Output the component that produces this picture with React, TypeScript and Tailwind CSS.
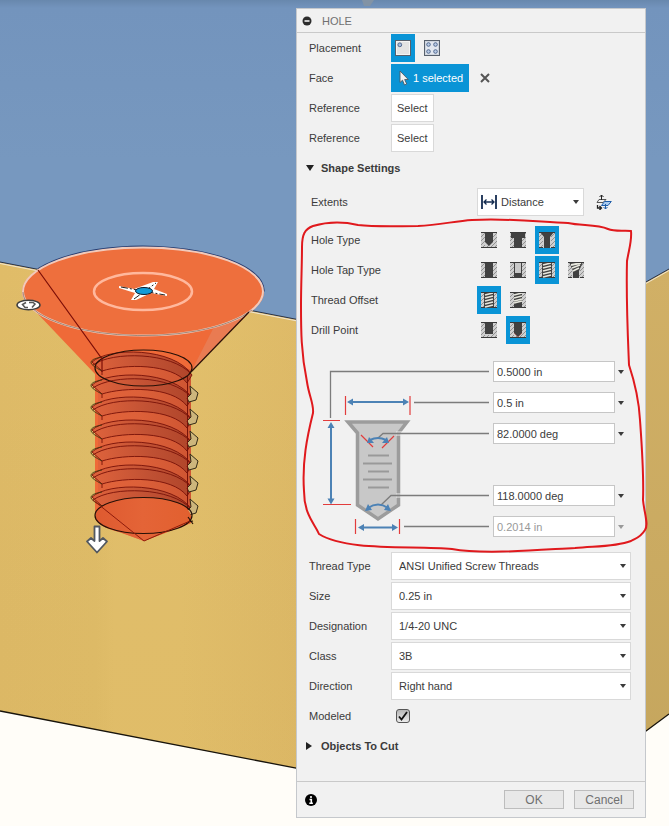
import { useState } from "react";
import type { ReactNode } from "react";

const HATCH = "M0 5L4 1M0 9L4 5M0 13L4 9M1 16L4 13M12 5L16 1M12 9L16 5M12 13L16 9M13 16L16 13M5 16L8 13M9 16L12 13";

const CAVITIES: Record<string, string> = {
  simple: "M4 0H12V10L8 14L4 10Z",
  counterbore: "M1 0H15V6H12V16H4V6H1Z",
  countersink: "M1 0H15L11 5V16H5V5Z",
  plain: "M4 0H12V16H4Z",
  clearance: "M4 0H12V16H4Z",
  tapped: "M3 0H13V16H3Z",
  taper: "M1 0H15L11 9V16H5V9Z",
  full: "M3 0H13V16H3Z",
  offset: "M4 0H12V16H4Z",
  flat: "M4 0H12V12H4Z",
  angled: "M4 0H12V11L8 15L4 11Z",
};

const THREADS: Record<string, string> = {
  tapped: "M4 3L12 1M4 6L12 4M4 9L12 7M4 12L12 10M4 15L12 13",
  full: "M4 3L12 1M4 6L12 4M4 9L12 7M4 12L12 10M4 15L12 13",
  offset: "M4 3L12 1M4 6L12 4M4 9L12 7M4 11L12 9",
  taper: "M3 3L13 1M4 6L12 3M5 9L11 6",
};

function HoleIcon({ kind }: { kind: string }) {
  const through = kind !== "simple" && kind !== "flat" && kind !== "angled";
  return (
    <svg viewBox="0 0 16 16" className="size-4" aria-hidden="true">
      <rect width="16" height="16" fill="#d0d0d0" />
      <path d={HATCH} stroke="#8a8a8a" strokeWidth="0.900" />
      <path d={CAVITIES[kind]} fill="#414141" />
      {kind === "clearance" && <path d="M5 0H11V11H5Z" fill="#c9c9c9" />}
      {THREADS[kind] && <path d={THREADS[kind]} stroke="#e9e9df" strokeWidth="1.800" />}
      {kind === "angled" && <path d="M4 11L8 15L12 11" fill="none" stroke="#a94b45" strokeWidth="0.600" />}
      <path d={through ? "M0 .5H16M0 15.5H4M12 15.5H16" : "M0 .5H16M0 15.5H16"} stroke="#3a3a3a" />
    </svg>
  );
}

function PlacementIcon({ multi }: { multi?: boolean }) {
  return (
    <svg viewBox="0 0 16 16" className="size-4" aria-hidden="true">
      <rect x="0.5" y="0.5" width="15" height="15" fill="#f4f4f4" stroke="#57606c" />
      {multi ? (
        <g fill="#b9cbe6" stroke="#52698f">
          <rect x="1.5" y="1.5" width="13" height="13" fill="#e2e7ef" stroke="#cfd5de" />
          <circle cx="4.5" cy="4.5" r="1.8" />
          <circle cx="11.5" cy="4.5" r="1.8" />
          <circle cx="4.5" cy="11.5" r="1.8" />
          <circle cx="11.5" cy="11.5" r="1.8" />
        </g>
      ) : (
        <>
          <rect x="2" y="2" width="12" height="12" fill="#e3e3e3" />
          <circle cx="4.8" cy="4.8" r="1.9" fill="#a9bedf" stroke="#52698f" />
        </>
      )}
    </svg>
  );
}

function Toggle({ on, label, onClick, children }: { on: boolean; label: string; onClick: () => void; children: ReactNode }) {
  return (
    <button
      type="button"
      aria-label={label}
      aria-pressed={on}
      onClick={onClick}
      className={`flex h-7 w-6 items-center justify-center ${on ? "bg-[#0a94d6]" : ""}`}
    >
      {children}
    </button>
  );
}

function Caret({ className = "" }: { className?: string }) {
  return (
    <svg viewBox="0 0 6 4" className={`h-1 w-1.5 ${className}`} aria-hidden="true">
      <path d="M0 0H6L3 4Z" fill="currentColor" />
    </svg>
  );
}

function Row({ label, htmlFor, children }: { label: string; htmlFor?: string; children: ReactNode }) {
  return (
    <div className="flex h-[30px] items-center pr-3.5 pl-3">
      {htmlFor ? (
        <label htmlFor={htmlFor} className="w-[82px] shrink-0">{label}</label>
      ) : (
        <span className="w-[82px] shrink-0">{label}</span>
      )}
      {children}
    </div>
  );
}

function SelectRow({ id, label, value }: { id: string; label: string; value: string }) {
  return (
    <Row label={label} htmlFor={id}>
      <div className="relative flex-1">
        <select id={id} className="block h-7 w-full appearance-none border border-[#d9d9d9] bg-white pr-5 pl-[7px] outline-none">
          <option>{value}</option>
        </select>
        <Caret className="pointer-events-none absolute top-3 right-[5px]" />
      </div>
    </Row>
  );
}

function ChoiceRow({ label, kinds, initial }: { label: string; kinds: string[]; initial: string }) {
  const [picked, setPicked] = useState(initial);
  return (
    <div role="group" aria-label={label} className="flex h-[30px] items-center pr-3.5 pl-3.5">
      <span className="w-[166px] shrink-0">{label}</span>
      <div className="flex gap-[5px]">
        {kinds.map((k) => (
          <Toggle key={k} label={`${label}: ${k}`} on={picked === k} onClick={() => setPicked(k)}>
            <HoleIcon kind={k} />
          </Toggle>
        ))}
      </div>
    </div>
  );
}

function Dimension({ label, value, disabled = false }: { label: string; value: string; disabled?: boolean }) {
  return (
    <div className={`flex items-center ${disabled ? "text-[#999]" : ""}`}>
      <input
        aria-label={label}
        defaultValue={value}
        disabled={disabled}
        className="h-[21px] w-full min-w-0 flex-1 border border-[#c6c6c6] bg-white px-[3px] outline-none"
      />
      <button type="button" aria-label={`${label} options`} disabled={disabled} className="flex h-5 w-3 items-center justify-center">
        <Caret />
      </button>
    </div>
  );
}

function HoleDiagram() {
  return (
    <svg viewBox="310 361 183 176" className="h-44 w-[183px] shrink-0" fill="none" aria-hidden="true">
      <path d="M348 422H407L398.500 433V505L378 519L357.500 505V433Z" fill="#c8c8c8" stroke="#9c9c9c" strokeWidth="3.500" />
      <path d="M368 455.500H389M363 463.500H392M368 471.500H389M363 479.500H392M368 487.500H389" stroke="#999" strokeWidth="2" />
      <path d="M396 432H402M396 435H402M396 494H402M396 497H402" stroke="#ededed" strokeWidth="1.200" />
      <path d="M330.500 418V371.500H489M414 402.500H489M378 438L383 433.500H489M381 505L391 495.500H489M404 526.500H489" stroke="#7c7c7c" strokeWidth="1.300" />
      <g stroke="#e23c3c" strokeWidth="1.200">
        <path d="M323 420.500H340M323 504.500H351M345.500 396V415M410 396V415M355.500 519V534M399.500 519V534M361 435L373 447M394 436L382 448" />
      </g>
      <g stroke="#4c82b5" strokeWidth="2">
        <path d="M331 425V501M351 402H405M361 527.500H394M370 440Q378 436 386 440M368 508Q378 501 388 508" />
      </g>
      <g fill="#4c82b5">
        <path d="M331 422L334.500 428H327.500ZM331 504.500L334.500 498.500H327.500ZM347 402L353 398.500V405.500ZM409 402L403 398.500V405.500ZM358 527.500L364 524V531ZM398 527.500L392 524V531Z" />
        <path d="M367 443L369 437L374 443ZM389 443L387 437L382 443ZM365 511L368 504L372 510ZM391 511L388 504L384 510Z" />
      </g>
    </svg>
  );
}

const TURNS = [362, 385, 407, 430, 452, 475, 497];

function ModelView() {
  return (
    <svg viewBox="0 0 669 826" preserveAspectRatio="xMinYMin slice" className="absolute inset-0 size-full" aria-hidden="true">
      <defs>
        <linearGradient id="sky" x2="0" y2="1">
          <stop stopColor="#6888ad" />
          <stop offset="0.02" stopColor="#7394bd" />
          <stop offset="0.400" stopColor="#7798bf" />
        </linearGradient>
        <linearGradient id="block" gradientUnits="userSpaceOnUse" x1="0" x2="300" y1="0" y2="0">
          <stop stopColor="#e0bc68" />
          <stop offset="0.320" stopColor="#e1be69" />
          <stop offset="0.380" stopColor="#e4c16c" />
          <stop offset="0.600" stopColor="#e4c16c" />
          <stop offset="1" stopColor="#dfbb68" />
        </linearGradient>
        <linearGradient id="shade" x1="0" x2="0" y1="0" y2="1">
          <stop stopColor="#000" stopOpacity="0" />
          <stop offset="1" stopColor="#a06a20" stopOpacity="0.050" />
        </linearGradient>
        <linearGradient id="side" x2="0" y2="1">
          <stop stopColor="#d1b066" />
          <stop offset="1" stopColor="#c4a55d" />
        </linearGradient>
        <linearGradient id="bore">
          <stop stopColor="#e2633a" />
          <stop offset="0.450" stopColor="#dc6039" />
          <stop offset="1" stopColor="#cf5532" />
        </linearGradient>
        <linearGradient id="groove">
          <stop stopColor="#df633c" />
          <stop offset="0.600" stopColor="#bf5033" />
          <stop offset="1" stopColor="#b0452a" />
        </linearGradient>
        <linearGradient id="tip">
          <stop stopColor="#de5a30" />
          <stop offset="0.500" stopColor="#e46437" />
          <stop offset="1" stopColor="#e2602f" />
        </linearGradient>
      </defs>
      <rect width="669" height="826" fill="#fffdf8" />
      <path d="M0 0H669V400H0Z" fill="url(#sky)" />
      <path d="M362 0H374L370 6H364Z" fill="#8293a5" />
      <path d="M0 262L507 360L534 814L0 711Z" fill="url(#block)" />
      <path d="M0 262L507 360L534 814L0 711Z" fill="url(#shade)" />
      <path d="M507 360L669 269V714L534 814Z" fill="url(#side)" />
      <path d="M0 262L507 360L669 269" fill="none" stroke="#27324b" />
      <path d="M0 263.500L507 361.500L669 270.500" fill="none" stroke="#f1e6cf" />
      <path d="M0 711L534 814L669 714" fill="none" stroke="#17130c" strokeWidth="1.300" />

      <path d="M36 312L95 374V518Q100 528 120 532L144 541L191 523V372L251 310Z" fill="#ef6a38" />
      <path d="M191 372L251 311L215 325Z" fill="#e97b52" />
      <path d="M98 366Q143 346 191 370V520Q143 485 98 515Z" fill="url(#bore)" />
      {TURNS.map((y) => (
        <g key={y} fill="none" stroke="#771108" strokeWidth="0.900">
          <path d={`M92 ${y}C108 ${y - 15} 174 ${y - 15} 192 ${y + 13}L187 ${y + 21}C172 ${y + 1} 124 ${y + 2} 102 ${y + 9}Z`} fill="url(#groove)" />
          <path d={`M93 ${y + 3}C112 ${y - 11} 172 ${y - 10} 191 ${y + 12}`} />
          <path d={`M102 ${y + 9}V${y + 13}`} />
          <path d={`M102 ${y - 5}Q90 ${y - 3} 91 ${y + 1}Q92 ${y + 4} 102 ${y + 9}`} stroke="#43330e" />
        </g>
      ))}
      {TURNS.slice(0, 6).map((y) => (
        <path key={y} d={`M190 ${y + 24}L198 ${y + 31}L196 ${y + 38}L189 ${y + 40}L187 ${y + 36}L191 ${y + 32}Z`} fill="#cdb67c" stroke="#332b17" />
      ))}
      <path d="M187.500 376V516" stroke="#771108" />
      <path d="M95 517C97 491 190 491 191 517V523L144 541L105 527Q95 522 95 517Z" fill="url(#tip)" />
      <g fill="none" stroke="#261007" strokeWidth="1.200">
        <ellipse cx="143.500" cy="515.500" rx="48.500" ry="18" />
        <ellipse cx="143.500" cy="368" rx="48.500" ry="18" />
        <path d="M188 517L193 524M188 522L193 521" />
      </g>
      <path d="M93 500L144 541L190 521" fill="none" stroke="#8e1b0c" />

      <ellipse cx="143" cy="291.500" rx="121" ry="44.500" fill="#ee6f3d" />
      <path d="M38 269A121 45 0 0 1 264 291.500" fill="none" stroke="#263c70" strokeWidth="1.500" />
      <ellipse cx="143" cy="291.500" rx="120" ry="44" fill="none" stroke="#f1cabb" strokeWidth="2" />
      <path d="M23 292A120 44 0 0 0 252 310" fill="none" stroke="#8b7768" strokeWidth="0.800" />
      <path d="M249 312L191 372" stroke="#2b1208" strokeWidth="1.200" />
      <path d="M38 270L102 359V372" fill="none" stroke="#7c0e07" strokeWidth="1.200" />
      <ellipse cx="143" cy="291.500" rx="49" ry="18.500" fill="none" stroke="#ffb89d" strokeWidth="2.500" />
      <path d="M119 286L134 289L153 282H158L154 289L167 294V296L151 293L136 300H131L135 293L119 288Z" fill="#fff" />
      <path d="M121 287L165 295M134 299L156 283" stroke="#222" strokeWidth="1" strokeDasharray="7 2 2 2" />
      <ellipse cx="144" cy="291" rx="8.500" ry="3.500" fill="#139bd7" stroke="#101828" />
      <ellipse cx="28.500" cy="305" rx="11.500" ry="4.800" fill="#fff" stroke="#3e3e3e" strokeWidth="1.500" />
      <path d="M26 302.500L22.500 304.500L25 307.500H28M29 302.500H33L35 304L32 307.500" fill="none" stroke="#555" strokeWidth="1.500" />
      <path d="M94.500 526.500H99.500V541L103 538L107 541.500L97 552.500L87 541.500L91 538L94.500 541Z" fill="#fff" stroke="#525860" strokeWidth="1.800" strokeLinejoin="round" />
    </svg>
  );
}

function RedMarkup() {
  return (
    <svg viewBox="296 8 350 810" className="pointer-events-none absolute -top-px -left-px h-[810px] w-[350px] overflow-visible" fill="none" aria-hidden="true">
      <path
        d="M313 226C330 221 345 222 358 225C376 227 397 226 418 226C440 225 455 221 472 220C510 218 540 222 568 223C581 226 597 224 608 229C615 232 626 230 631 231C632 241 629 249 627 261C626 300 628 340 629 365C634 380 639 402 640 420C642 448 644 474 643 500C644 512 649 525 645 530C640 538 636 538 631 541C615 547 596 546 575 548C550 549 485 555 452 549C415 545 347 552 319 534C315 524 304 515 304 491C302 462 307 437 313 413C314 404 309 396 307 382C301 353 301 330 301 305C301 284 302 265 302 247C302 234 305 229 313 226Z"
        stroke="#e0191d"
        strokeWidth="2"
      />
    </svg>
  );
}

export default function App() {
  const [placement, setPlacement] = useState("single");
  return (
    <main className="relative flex min-h-screen justify-end overflow-hidden pt-2 pr-[23px] pb-2 font-['Liberation_Sans',Arial,sans-serif] text-[11px] leading-4 text-[#3b3b3b]">
      <ModelView />
      <section aria-label="Hole" className="relative w-[350px] max-w-full self-start border border-[#c5c8cc] bg-[#f1f1f1]">
        <header className="flex h-6 items-center gap-2.5 border-b border-[#c9c9c9] px-[5px] text-[#707070]">
          <button type="button" aria-label="Collapse">
            <svg viewBox="0 0 10 10" className="size-2.5">
              <circle cx="5" cy="5" r="4.500" fill="#2c2c2c" />
              <path d="M2.500 5H7.500" stroke="#fff" strokeWidth="1.500" />
            </svg>
          </button>
          <h1>HOLE</h1>
        </header>

        <Row label="Placement">
          <div className="flex gap-[5px]">
            <Toggle label="Single hole" on={placement === "single"} onClick={() => setPlacement("single")}>
              <PlacementIcon />
            </Toggle>
            <Toggle label="Multiple holes" on={placement === "multi"} onClick={() => setPlacement("multi")}>
              <PlacementIcon multi />
            </Toggle>
          </div>
        </Row>
        <Row label="Face">
          <button type="button" className="flex h-7 items-center gap-1 bg-[#0a94d6] pr-1.5 pl-2 text-white">
            <svg viewBox="0 0 10 16" className="h-4 w-2.5" aria-hidden="true">
              <path d="M1 1V12.500L3.500 10.200L5.500 15L7.700 14L5.700 9.500H9.300Z" fill="#f2f2f2" stroke="#4b5a66" strokeWidth="0.900" />
            </svg>
            1 selected
          </button>
          <button type="button" aria-label="Clear selection" className="ml-2.5 flex size-3 items-center justify-center">
            <svg viewBox="0 0 10 10" className="size-2.5">
              <path d="M1 1L9 9M9 1L1 9" stroke="#555" strokeWidth="2" />
            </svg>
          </button>
        </Row>
        <Row label="Reference">
          <button type="button" className="h-7 border border-[#d9d9d9] bg-white px-[5px]">Select</button>
        </Row>
        <Row label="Reference">
          <button type="button" className="h-7 border border-[#d9d9d9] bg-white px-[5px]">Select</button>
        </Row>

        <button type="button" aria-expanded="true" className="flex h-[30px] w-full items-center gap-[7px] px-[9px] font-bold">
          <svg viewBox="0 0 8 6" className="h-1.5 w-2" aria-hidden="true">
            <path d="M0 0H8L4 6Z" fill="#222" />
          </svg>
          Shape Settings
        </button>

        <div className="mb-1 flex h-[38px] items-center pl-3.5">
          <label htmlFor="extents" className="w-[166px] shrink-0">Extents</label>
          <div className="relative w-[107px]">
            <select id="extents" className="block h-7 w-full appearance-none border border-[#d9d9d9] bg-white pr-4 pl-[23px] outline-none">
              <option>Distance</option>
            </select>
            <svg viewBox="0 0 16 16" className="pointer-events-none absolute top-1.5 left-1 size-4" aria-hidden="true">
              <path d="M1 1V15M15 1V15" stroke="#142c50" strokeWidth="1.800" />
              <path d="M3 8H13M5.500 5.500L3 8L5.500 10.500M10.500 5.500L13 8L10.500 10.500" fill="none" stroke="#142c50" strokeWidth="1.300" />
            </svg>
            <Caret className="pointer-events-none absolute top-3 right-[5px]" />
          </div>
          <button type="button" aria-label="Flip direction" className="ml-3">
            <svg viewBox="0 0 16 16" className="size-4" fill="none">
              <path d="M3 5.500H10L7 8.500H1Z" stroke="#444" strokeWidth="0.900" />
              <path d="M8.500 7.500H15.300L12 11.500H5.500Z" fill="#a9cbef" stroke="#1e5da8" />
              <path d="M5.500 6V1M3.500 3L5.500 1L7.500 3" stroke="#222" />
              <path d="M1.500 11V14H5M3.500 12L5.500 14L3.500 16" stroke="#222" strokeWidth="1.300" />
              <path d="M9.500 10V15M7.500 13L9.500 15L11.500 13" stroke="#1e5da8" />
            </svg>
          </button>
        </div>

        <ChoiceRow label="Hole Type" kinds={["simple", "counterbore", "countersink"]} initial="countersink" />
        <ChoiceRow label="Hole Tap Type" kinds={["plain", "clearance", "tapped", "taper"]} initial="tapped" />
        <ChoiceRow label="Thread Offset" kinds={["full", "offset"]} initial="full" />
        <ChoiceRow label="Drill Point" kinds={["flat", "angled"]} initial="angled" />

        <div className="flex pt-4 pr-[18px] pb-3.5 pl-[13px]">
          <HoleDiagram />
          <div className="flex flex-1 flex-col gap-2.5">
            <Dimension label="Depth" value="0.5000 in" />
            <Dimension label="Countersink diameter" value="0.5 in" />
            <Dimension label="Countersink angle" value="82.0000 deg" />
            <div className="mt-auto">
              <Dimension label="Tip angle" value="118.0000 deg" />
            </div>
            <Dimension label="Hole diameter" value="0.2014 in" disabled />
          </div>
        </div>

        <SelectRow id="thread" label="Thread Type" value="ANSI Unified Screw Threads" />
        <SelectRow id="size" label="Size" value="0.25 in" />
        <SelectRow id="designation" label="Designation" value="1/4-20 UNC" />
        <SelectRow id="class" label="Class" value="3B" />
        <SelectRow id="direction" label="Direction" value="Right hand" />
        <Row label="Modeled" htmlFor="modeled">
          <div className="ml-[5px] grid">
            <input
              id="modeled"
              type="checkbox"
              defaultChecked
              className="peer col-start-1 row-start-1 size-3.5 appearance-none rounded-[3px] border border-[#555] bg-linear-to-b from-[#b5b5b5] to-[#ececec]"
            />
            <svg viewBox="0 0 14 14" className="pointer-events-none invisible col-start-1 row-start-1 size-3.5 peer-checked:visible" aria-hidden="true">
              <path d="M3 7.500L5.500 10.500L11 3" fill="none" stroke="#111" strokeWidth="1.800" />
            </svg>
          </div>
        </Row>
        <button type="button" aria-expanded="false" className="mb-5 flex h-[30px] w-full items-center gap-[9px] px-[9px] font-bold">
          <svg viewBox="0 0 6 8" className="h-2 w-1.5" aria-hidden="true">
            <path d="M0 0V8L6 4Z" fill="#222" />
          </svg>
          Objects To Cut
        </button>

        <footer className="flex h-9 items-center gap-2.5 border-t border-[#c9c9c9] pr-[11px] pl-2 text-xs text-[#707070]">
          <button type="button" aria-label="Information" className="mr-auto">
            <svg viewBox="0 0 12 12" className="size-3">
              <circle cx="6" cy="6" r="6" fill="#000" />
              <path d="M6 2V4M4.500 5.500H6.300V9M4.300 9.300H7.900" fill="none" stroke="#fff" strokeWidth="1.600" />
            </svg>
          </button>
          <button type="button" className="h-[19px] w-[60px] border border-[#bdbdbd] bg-[#e8e8e8]">OK</button>
          <button type="button" className="h-[19px] w-[60px] border border-[#bdbdbd] bg-[#e8e8e8]">Cancel</button>
        </footer>
        <RedMarkup />
      </section>
    </main>
  );
}
